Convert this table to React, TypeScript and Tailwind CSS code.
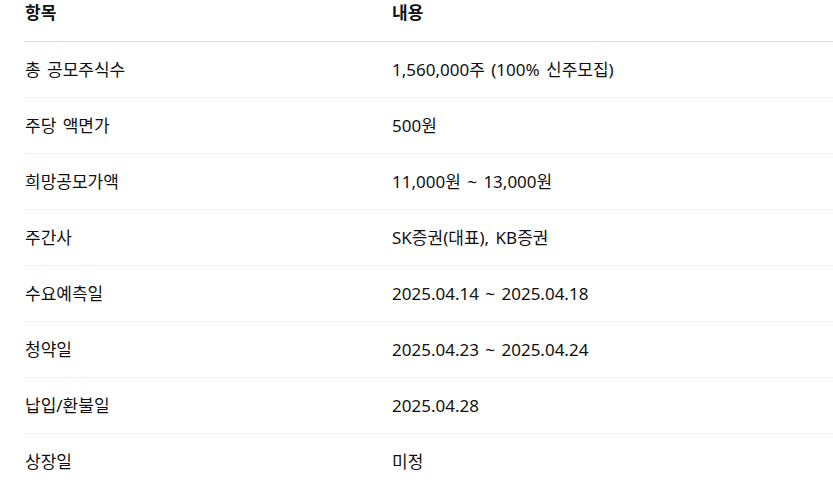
const rows: [string, string][] = [
  ["총 공모주식수", "1,560,000주 (100% 신주모집)"],
  ["주당 액면가", "500원"],
  ["희망공모가액", "11,000원 ~ 13,000원"],
  ["주간사", "SK증권(대표), KB증권"],
  ["수요예측일", "2025.04.14 ~ 2025.04.18"],
  ["청약일", "2025.04.23 ~ 2025.04.24"],
  ["납입/환불일", "2025.04.28"],
  ["상장일", "미정"],
];

export default function App() {
  return (
    <div
      className="w-[833px] h-[492px] bg-white overflow-hidden text-[#111] text-[17px] [word-spacing:2px]"
      style={{ fontFamily: '"Noto Sans", "Noto Sans CJK KR", sans-serif' }}
    >
      <div className="ml-[25px] w-[808px]">
        <div className="flex h-[42px] border-b border-[#dcdcdc] font-bold">
          <div className="w-[367px]">항목</div>
          <div>내용</div>
        </div>
        {rows.map(([k, v], i) => (
          <div
            key={k}
            className={
              "flex items-center h-[56px] " +
              (i < rows.length - 1 ? "border-b border-[#eeeeee]" : "")
            }
          >
            <div className="w-[367px]">{k}</div>
            <div>{v}</div>
          </div>
        ))}
      </div>
    </div>
  );
}
